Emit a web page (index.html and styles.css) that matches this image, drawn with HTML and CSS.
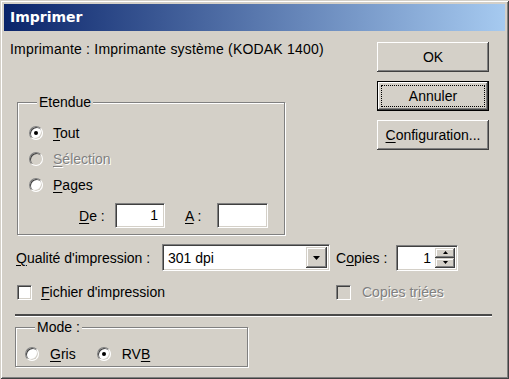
FILE: index.html
```html
<!DOCTYPE html>
<html lang="fr">
<head>
    <meta charset="UTF-8">
    <meta name="viewport" content="width=device-width, initial-scale=1.0">
    <title>Imprimer</title>
    <link rel="stylesheet" href="styles.css">
</head>
<body>
    <div class="window">
        <div class="titlebar">Imprimer</div>

        <div class="top">
            <div class="left">
                <div class="printer">Imprimante : Imprimante système (KODAK 1400)</div>

                <fieldset class="group range">
                    <legend>Etendue</legend>
                    <div class="radio"><span class="mark checked"></span><span><u>T</u>out</span></div>
                    <div class="radio disabled"><span class="mark"></span><span class="label"><u>S</u>élection</span></div>
                    <div class="radio"><span class="mark"></span><span><u>P</u>ages</span></div>
                    <div class="pages">
                        <span class="from-label"><u>D</u>e :</span>
                        <span class="field from">1</span>
                        <span class="to-label"><u>A</u> :</span>
                        <span class="field to"></span>
                    </div>
                </fieldset>
            </div>

            <div class="buttons">
                <button class="btn">OK</button>
                <button class="btn default"><span class="focus">Annuler</span></button>
                <button class="btn"><u>C</u>onfiguration...</button>
            </div>
        </div>

        <div class="quality">
            <span class="quality-label"><u>Q</u>ualité d'impression :</span>
            <div class="combo">
                <span class="combo-text">301 dpi</span>
                <span class="combo-btn">
                    <svg width="7" height="4" viewBox="0 0 7 4"><path d="M0 0h7L3.5 4z" fill="#000"/></svg>
                </span>
            </div>
            <span class="copies-label">C<u>o</u>pies :</span>
            <div class="spinner">
                <span class="spin-text">1</span>
                <span class="spin-btns">
                    <span class="spin-btn"><svg width="5" height="3" viewBox="0 0 5 3"><path d="M2.5 0L5 3H0z" fill="#000"/></svg></span>
                    <span class="spin-btn"><svg width="5" height="3" viewBox="0 0 5 3"><path d="M0 0h5L2.5 3z" fill="#000"/></svg></span>
                </span>
            </div>
        </div>

        <div class="checks">
            <div class="check file"><span class="box"></span><span><u>F</u>ichier d'impression</span></div>
            <div class="check disabled"><span class="box"></span><span class="label">Copies tr<u>i</u>ées</span></div>
        </div>

        <div class="separator"></div>

        <fieldset class="group mode">
            <legend>Mode :</legend>
            <div class="mode-row">
                <div class="radio"><span class="mark"></span><span><u>G</u>ris</span></div>
                <div class="radio rvb"><span class="mark checked"></span><span>RV<u>B</u></span></div>
            </div>
        </fieldset>
    </div>
</body>
</html>
```

FILE: styles.css
```css
* {
    box-sizing: border-box;
}

body {
    margin: 0;
    background-color: #d4d0c8;
    font-family: "Liberation Sans", Arial, sans-serif;
    font-size: 14px;
    color: #000;
}

u {
    text-decoration: underline;
    text-underline-offset: 2px;
}

.window {
    width: 509px;
    height: 379px;
    padding: 4px;
    background-color: #d4d0c8;
    box-shadow: inset 1px 1px 0 #d4d0c8, inset -1px -1px 0 #404040,
                inset 2px 2px 0 #fff, inset -2px -2px 0 #808080;
}

.titlebar {
    height: 27px;
    line-height: 27px;
    padding-left: 6px;
    background: linear-gradient(to right, #0a246a, #a6caf0);
    color: #fff;
    font-family: "DejaVu Sans", sans-serif;
    font-weight: bold;
    font-size: 14px;
}

/* top part: printer name, range group and buttons */
.top {
    display: flex;
    align-items: flex-start;
}

.left {
    width: 330px;
}

.printer {
    margin: 10px 0 0 6px;
    line-height: 16px;
    letter-spacing: 0.2px;
    white-space: nowrap;
}

.group {
    margin: 0;
    padding: 0;
    border: 1px solid #808080;
    box-shadow: inset 1px 1px 0 #fff, 1px 1px 0 #fff;
    min-inline-size: 0;
}

.group legend {
    padding: 0 2px;
    line-height: 16px;
    background-color: #d4d0c8;
}

.range {
    width: 268px;
    margin: 37px 0 0 13px;
    padding: 10px 0 6px 11px;
}

.range legend {
    margin-left: 8px;
}

.radio {
    display: flex;
    align-items: center;
    height: 26px;
}

.mark {
    position: relative;
    width: 14px;
    height: 14px;
    margin-right: 10px;
    border-radius: 50%;
    background-color: #fff;
    border: 1px solid;
    border-color: #808080 #fff #fff #808080;
    box-shadow: inset 1px 1px 0 #404040, inset -1px -1px 0 #d4d0c8;
}

.mark.checked::after {
    content: "";
    position: absolute;
    left: 4px;
    top: 4px;
    width: 4px;
    height: 4px;
    border-radius: 50%;
    background-color: #000;
}

.disabled .mark,
.disabled .box {
    background-color: #d4d0c8;
}

.disabled .label {
    color: #808080;
    text-shadow: 1px 1px 0 #fff;
}

.pages {
    display: flex;
    align-items: center;
    margin-top: 5px;
    height: 25px;
}

.from-label {
    margin-left: 50px;
    width: 36px;
}

.to-label {
    margin-left: 20px;
    width: 32px;
}

.field {
    height: 25px;
    background-color: #fff;
    border: 1px solid;
    border-color: #808080 #fff #fff #808080;
    box-shadow: inset 1px 1px 0 #404040, inset -1px -1px 0 #d4d0c8;
    line-height: 23px;
    text-align: right;
    padding-right: 6px;
}

.field.from {
    width: 50px;
}

.field.to {
    width: 51px;
}

/* buttons */
.buttons {
    display: flex;
    flex-direction: column;
    gap: 9px;
    width: 112px;
    margin: 11px 16px 0 auto;
}

.btn {
    height: 30px;
    padding: 0;
    border: none;
    background-color: #d4d0c8;
    font-family: inherit;
    font-size: 14px;
    color: #000;
    box-shadow: inset -1px -1px 0 #404040, inset 1px 1px 0 #fff,
                inset -2px -2px 0 #808080, inset 2px 2px 0 #d4d0c8;
}

.btn.default {
    border: 1px solid #000;
    padding: 3px;
}

.focus {
    display: block;
    height: 100%;
    line-height: 20px;
    border: 1px dotted #000;
}

/* quality and copies */
.quality {
    display: flex;
    align-items: center;
    margin-top: 9px;
    height: 27px;
}

.quality-label {
    width: 146px;
    margin-left: 12px;
}

.combo {
    display: flex;
    align-items: center;
    width: 168px;
    height: 27px;
    padding: 2px;
    background-color: #fff;
    border: 1px solid;
    border-color: #808080 #fff #fff #808080;
    box-shadow: inset 1px 1px 0 #404040, inset -1px -1px 0 #d4d0c8;
}

.combo-text {
    flex: 1;
    padding-left: 3px;
}

.combo-btn,
.spin-btn {
    display: flex;
    align-items: center;
    justify-content: center;
    background-color: #d4d0c8;
    box-shadow: inset -1px -1px 0 #404040, inset 1px 1px 0 #d4d0c8,
                inset -2px -2px 0 #808080, inset 2px 2px 0 #fff;
}

.combo-btn {
    width: 21px;
    height: 21px;
}

.copies-label {
    width: 60px;
    margin-left: 6px;
}

.spinner {
    display: flex;
    width: 62px;
    height: 26px;
    padding: 2px;
    background-color: #fff;
    border: 1px solid;
    border-color: #808080 #fff #fff #808080;
    box-shadow: inset 1px 1px 0 #404040, inset -1px -1px 0 #d4d0c8;
}

.spin-text {
    flex: 1;
    text-align: right;
    line-height: 20px;
    padding-right: 4px;
}

.spin-btns {
    display: flex;
    flex-direction: column;
    width: 20px;
}

.spin-btn {
    flex: 1;
}

/* check boxes */
.checks {
    display: flex;
    align-items: center;
    margin-top: 13px;
    padding-left: 13px;
    height: 16px;
}

.check {
    display: flex;
    align-items: center;
}

.check.file {
    width: 319px;
}

.box {
    width: 15px;
    height: 15px;
    margin-right: 9px;
    background-color: #fff;
    border: 1px solid;
    border-color: #808080 #fff #fff #808080;
    box-shadow: inset 1px 1px 0 #404040, inset -1px -1px 0 #d4d0c8;
}

.disabled .box {
    margin-right: 11px;
}

.separator {
    width: 477px;
    height: 2px;
    margin: 14px 0 0 11px;
    background-color: #4a4a4a;
    box-shadow: 0 1px 0 #fff;
}

/* mode group */
.mode {
    width: 233px;
    margin: 3px 0 0 11px;
    padding: 9px 0 2px 9px;
}

.mode legend {
    margin-left: 10px;
}

.mode-row {
    display: flex;
}

.mode .radio {
    height: 20px;
}

.mode .mark {
    margin-right: 11px;
}

.rvb {
    margin-left: 21px;
}
```
